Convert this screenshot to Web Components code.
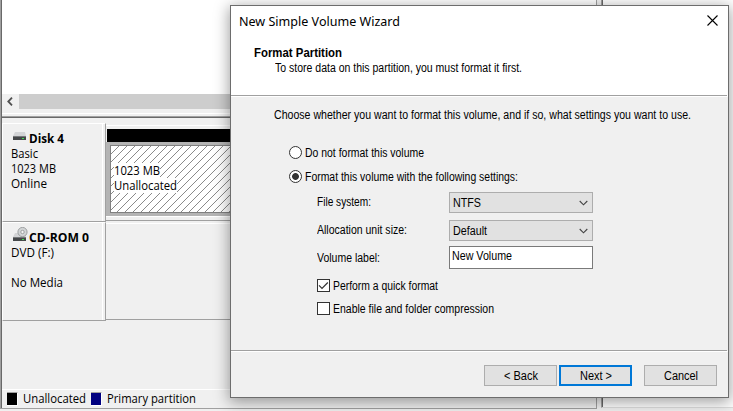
<!DOCTYPE html>
<html lang="en"><head><meta charset="utf-8"><title>New Simple Volume Wizard</title>
<style>html,body{margin:0;width:733px;height:411px;overflow:hidden;background:#f0f0f0}</style></head>
<body><disk-console></disk-console><wizard-dialog></wizard-dialog>
<script>
const define=(name,html,init)=>customElements.define(name,class extends HTMLElement{
  connectedCallback(){
    if(this.shadowRoot)return;
    const t=document.createElement('template');t.innerHTML=html;
    this.attachShadow({mode:'open'}).append(t.content.cloneNode(true));
    if(init)init(this,this.shadowRoot);
  }
});
/* A single line of text condensed or widened to the width given by w. */
define('ui-text',`<style>:host{display:block;white-space:nowrap;flex:none}span{display:inline-block;transform-origin:0 50%}</style><span><slot></slot></span>`,(el,r)=>{
  const w=+el.getAttribute('w');el.style.width=w+'px';
  const s=r.querySelector('span');
  s.style.transform='scaleX('+(w/s.getBoundingClientRect().width)+')';
});
define('disk-icon',`<style>:host{display:block;width:15px;height:15px;flex:none}svg{display:block}.cd{display:none}:host([cd]) .cd{display:block}</style>
<svg width="15" height="15"><path d="M2 6h10l1 4H0z" fill="#d3d4d6"/><path d="M0 10h13v4H0z" fill="#454749"/><path d="M0 10h13v1H0z" fill="#77797b"/><path d="M9 12h2v1H9z" fill="#3fe052"/>
<g class="cd"><circle cx="9.5" cy="5" r="4.6" fill="#d2d5d6" stroke="#8e9192" stroke-width=".8"/><circle cx="9.5" cy="5" r="1.7" fill="#f5f5f5" stroke="#8e9192" stroke-width=".8"/></g></svg>`);
define('disk-card',`<style>:host{display:block;box-sizing:border-box;width:104px;border-top:1px solid #fff;border-left:1px solid #fff;border-right:1px solid #a0a0a0;border-bottom:1px solid #a0a0a0;padding:7px 0 0 8px;box-shadow:inset -2px 0 #f0f0f0,inset -3px 0 #fff;line-height:15px}
.h{display:flex;height:15px;font-weight:bold;padding-left:2px;gap:1px}</style><div class="h"><slot name="icon"></slot><slot name="name"></slot></div><slot></slot>`);
define('legend-item',`<style>:host{display:flex;gap:5px;line-height:15px}i{margin-top:1px;background:var(--c);border-top:1px solid #a0a0a0;border-right:1px solid #fff;border-bottom:1px solid #fff;box-sizing:border-box;width:11px;height:14px}</style><i></i><slot></slot>`);
define('disk-console',`<style>
:host{display:grid;grid-template-columns:597px 4px 1fr;width:733px;height:411px;font:12px "Open Sans","Noto Sans",sans-serif;color:#000}
.main{box-sizing:border-box;height:409px;border-left:1px solid #a0a0a0;border-right:1px solid #a0a0a0;border-bottom:1px solid #a0a0a0;box-shadow:inset 1px 0 #696969;padding-left:1px;display:flex;flex-direction:column}
.list{height:94px;background:#fff}.scroll{height:15px;display:flex;background:#cdcdcd}.scroll div{width:17px;background:#f0f0f0}.scroll svg{display:block}
.split{height:9px;box-sizing:border-box;background:linear-gradient(#f0f0f0 4px,#fff 4px 5px,#f0f0f0 5px 7px,#a0a0a0 7px 8px,#696969 8px)}
.row{display:grid;grid-template-columns:104px 1fr;height:99px}.r1{margin-top:5px}
disk-card{height:99px}
.part{margin-top:2px;box-sizing:border-box;height:96px;padding:3px 0 0 1px;border-top:1px solid #fff;border-bottom:1px solid #a0a0a0;background:#f0f0f0}
.bar{height:13px;background:#000}.vol{height:75px;background:#b4b4b4;padding:3px 3px 3px 4px;margin-left:-1px;box-sizing:border-box;border-bottom:1px solid #fff}
.hatch{height:68px;box-sizing:border-box;background:#fff;border:1px solid #808080;position:relative;padding:17px 0 0 3px;line-height:15px}.hatch>svg{position:absolute;inset:0}
.hatch ui-text{position:relative;background:#fff}
.r2 .empty{border-top:1px solid #fff;border-bottom:1px solid #a0a0a0;height:97px;box-sizing:border-box;margin-top:1px}
.legend{margin-top:auto;height:19px;border-top:1px solid #fff;box-sizing:border-box;display:flex;gap:5px;padding:1px 0 0 5px}
.side{height:408px;box-sizing:border-box;border-left:1px solid #a0a0a0;box-shadow:inset 1px 0 #696969;background:#fff;border-bottom:1px solid #ddd}
</style><div class="main"><div class="list"></div><div class="scroll"><div><svg width="17" height="15"><path d="M10 3.7 6.3 7.5 10 11.3" fill="none" stroke="#505050" stroke-width="1.8"/></svg></div></div><div class="split"></div>
<div class="row r1"><disk-card><disk-icon slot="icon" style="margin-top:-5px"></disk-icon><ui-text slot="name" w="35">Disk 4</ui-text><ui-text w="27">Basic</ui-text><ui-text w="45">1023 MB</ui-text><ui-text w="36">Online</ui-text></disk-card>
<div class="part"><div class="bar"></div><div class="vol"><div class="hatch"><svg width="100%" height="100%"><defs><pattern id="p" width="8" height="8" patternUnits="userSpaceOnUse"><path d="M-1 9 9 -1M-1 1 1 -1M7 9 9 7" stroke="#8a8a8a" stroke-width="1"/></pattern></defs><rect width="100%" height="100%" fill="url(#p)"/></svg><ui-text w="46">1023 MB</ui-text><ui-text w="63">Unallocated</ui-text></div></div></div></div>
<div class="row r2"><disk-card><disk-icon cd slot="icon" style="margin-top:-3px"></disk-icon><ui-text slot="name" w="60">CD-ROM 0</ui-text><ui-text w="43">DVD (F:)</ui-text><ui-text w="52" style="margin-top:15px">No Media</ui-text></disk-card><div class="empty"></div></div>
<div class="legend"><legend-item style="--c:#000"><ui-text w="63">Unallocated</ui-text></legend-item><legend-item style="--c:#000080"><ui-text w="89">Primary partition</ui-text></legend-item></div></div><div></div><div class="side"></div>`);
define('radio-button',`<style>:host{display:flex;gap:3px;line-height:14px;height:14px}i{width:13px;height:13px;border:1px solid #333;border-radius:50%;background:#fff;box-sizing:border-box}:host([checked]) i{background:radial-gradient(circle,#333 3px,#fff 3.8px)}</style><i></i><slot></slot>`);
define('check-box',`<style>:host{display:flex;gap:3px;line-height:14px;height:14px}i{width:13px;height:13px;border:1px solid #333;background:#fff;box-sizing:border-box}svg{display:none}:host([checked]) svg{display:block}</style><i><svg width="11" height="11"><path d="M1 5.3 4 8.3 9.8 2.5" fill="none" stroke="#333" stroke-width="1.2"/></svg></i><slot></slot>`);
define('combo-box',`<style>:host{display:flex;justify-content:space-between;box-sizing:border-box;width:144px;height:21px;border:1px solid #adadad;background:#e1e1e1;padding:3px 4px 0 3px}svg{display:block}</style><slot></slot><svg width="9" height="13"><path d="M.7 5 4.5 8.8 8.3 5" fill="none" stroke="#444" stroke-width="1.1"/></svg>`);
define('text-field',`<style>:host{display:block;box-sizing:border-box;width:144px;height:23px;border:1px solid #7a7a7a;background:#fff;padding:2px 0 0 2px}</style><slot></slot>`);
define('form-row',`<style>:host{display:grid;grid-template-columns:132px 144px;line-height:14px}.l{padding-top:3px}</style><div class="l"><slot name="label"></slot></div><slot></slot>`);
define('push-button',`<style>:host{display:flex;justify-content:center;box-sizing:border-box;width:73px;height:21px;border:1px solid #adadad;background:#e1e1e1;padding-top:3px;line-height:14px}:host([default]){border:2px solid #0078d7;padding-top:2px}</style><slot></slot>`);
define('wizard-dialog',`<style>
:host{position:absolute;left:230px;top:5px;width:499px;height:393px;box-sizing:border-box;border:1px solid #6d6d6d;background:#f0f0f0;box-shadow:0 3px 14px 1px rgba(0,0,0,.38);font:12px/14px "Liberation Sans",Arial,sans-serif;color:#000;display:flex;flex-direction:column}
header{height:90px;box-sizing:border-box;border-bottom:1px solid #a0a0a0;background:#fff;margin-right:1px;padding-left:8px}
.top{background:#fff;border-bottom:1px solid #fff}
.bar{display:flex;justify-content:space-between;padding:6px 9px 0 0;height:27px;font:13px/18px "Noto Sans",sans-serif;box-sizing:border-box}
.bar svg{margin-top:3px}
h1{margin:13px 0 0 15px;font-size:12px;font-weight:bold}
header p{margin:1px 0 0 36px}
.body{padding:11px 0 0 43px;flex:1}
radio-button{margin-left:15px}.sub{margin-left:43px}
footer{height:46px;box-sizing:border-box;border-top:1px solid #fff;display:flex;padding:13px 0 0 253px;gap:2px}.line{height:1px;background:#a0a0a0;margin-right:1px}
</style><div class="top"><header><div class="bar"><ui-text w="161">New Simple Volume Wizard</ui-text><svg width="11" height="11"><path d="M.5 .5l10 10M10.500.5l-10 10" stroke="#000" stroke-width="1.1"/></svg></div><h1><ui-text w="88">Format Partition</ui-text></h1><p><ui-text w="247">To store data on this partition, you must format it first.</ui-text></p></header></div>
<div class="body"><ui-text w="417">Choose whether you want to format this volume, and if so, what settings you want to use.</ui-text>
<radio-button style="margin-top:24px"><ui-text w="119">Do not format this volume</ui-text></radio-button>
<radio-button checked style="margin-top:10px"><ui-text w="213">Format this volume with the following settings:</ui-text></radio-button>
<div class="sub"><form-row style="margin-top:8px"><ui-text slot="label" w="54">File system:</ui-text><combo-box><ui-text w="28">NTFS</ui-text></combo-box></form-row>
<form-row style="margin-top:7px"><ui-text slot="label" w="90">Allocation unit size:</ui-text><combo-box><ui-text w="34">Default</ui-text></combo-box></form-row>
<form-row style="margin-top:5px"><ui-text slot="label" w="63" style="margin-top:2px">Volume label:</ui-text><text-field><ui-text w="60">New Volume</ui-text></text-field></form-row>
<check-box checked style="margin-top:10px"><ui-text w="105">Perform a quick format</ui-text></check-box><check-box style="margin-top:9px"><ui-text w="161">Enable file and folder compression</ui-text></check-box></div></div>
<div class="line"></div><footer><push-button><ui-text w="34">&lt; Back</ui-text></push-button><push-button default><ui-text w="32">Next &gt;</ui-text></push-button><push-button style="margin-left:10px"><ui-text w="34">Cancel</ui-text></push-button></footer>`);
</script></body></html>
